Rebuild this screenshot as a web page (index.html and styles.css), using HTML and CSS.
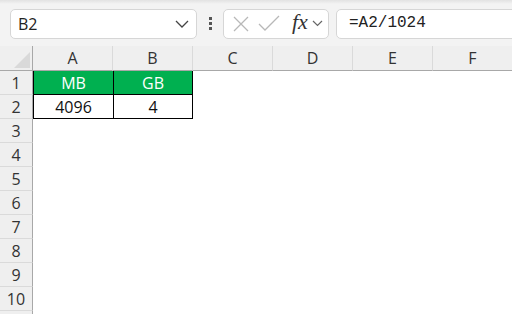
FILE: index.html
```html
<!DOCTYPE html>
<html lang="en">
<head>
    <meta charset="UTF-8">
    <title>Sheet</title>
    <link rel="stylesheet" href="styles.css">
</head>
<body>
    <div class="toolbar">
        <div class="name-box">
            <span class="name-text">B2</span>
            <svg class="chev" width="14" height="8" viewBox="0 0 14 8"><path d="M1 1 L7 7 L13 1" fill="none" stroke="#444" stroke-width="1.3"/></svg>
        </div>
        <div class="dots"><span></span><span></span><span></span></div>
        <div class="fx-box">
            <svg class="ico" width="18" height="18" viewBox="0 0 18 18"><path d="M2 2 L16 16 M16 2 L2 16" stroke="#b8b8b8" stroke-width="1.3"/></svg>
            <svg class="ico" width="22" height="18" viewBox="0 0 22 18"><path d="M1 9 L7 15 L21 1" fill="none" stroke="#b8b8b8" stroke-width="1.3"/></svg>
            <span class="fx">fx</span>
            <svg class="chev-sm" width="11" height="7" viewBox="0 0 11 7"><path d="M1 1 L5.5 5.5 L10 1" fill="none" stroke="#666" stroke-width="1.2"/></svg>
        </div>
        <div class="formula">=A2/1024</div>
    </div>
    <div class="sheet">
        <div class="corner"><div class="tri"></div></div>
        <div class="col-h">A</div>
        <div class="col-h">B</div>
        <div class="col-h">C</div>
        <div class="col-h">D</div>
        <div class="col-h">E</div>
        <div class="col-h">F</div>

        <div class="row-h">1</div>
        <div class="cell head bl">MB</div>
        <div class="cell head bl br">GB</div>
        <div class="cell"></div><div class="cell"></div><div class="cell"></div><div class="cell"></div>

        <div class="row-h">2</div>
        <div class="cell val bl bt bb">4096</div>
        <div class="cell val bl br bt bb">4</div>
        <div class="cell"></div><div class="cell"></div><div class="cell"></div><div class="cell"></div>

        <div class="row-h">3</div><div class="cell span"></div>
        <div class="row-h">4</div><div class="cell span"></div>
        <div class="row-h">5</div><div class="cell span"></div>
        <div class="row-h">6</div><div class="cell span"></div>
        <div class="row-h">7</div><div class="cell span"></div>
        <div class="row-h">8</div><div class="cell span"></div>
        <div class="row-h">9</div><div class="cell span"></div>
        <div class="row-h">10</div><div class="cell span"></div>
        <div class="row-h"></div><div class="cell span"></div>
    </div>
</body>
</html>
```

FILE: styles.css
```css
* {
    box-sizing: border-box;
}
body {
    margin: 0;
    width: 512px;
    height: 314px;
    overflow: hidden;
    background: #fff;
    font-family: 'Open Sans', 'Liberation Sans', Arial, sans-serif;
}
.toolbar {
    display: flex;
    align-items: center;
    height: 46px;
    padding: 1px 0 0 10px;
    background: linear-gradient(#e2e2e2, #f3f3f3 4px, #f3f3f3);
}
.name-box {
    display: flex;
    align-items: center;
    justify-content: space-between;
    width: 187px;
    height: 30px;
    padding: 0 7px 0 7px;
    background: #fff;
    border: 1px solid #d6d6d6;
    border-radius: 5px;
}
.name-text {
    font-size: 16px;
    color: #222;
}
.dots {
    display: flex;
    flex-direction: column;
    gap: 2px;
    margin: 0 11px 0 12px;
}
.dots span {
    width: 3px;
    height: 3px;
    background: #555;
}
.fx-box {
    display: flex;
    align-items: center;
    width: 106px;
    height: 30px;
    padding: 0 4px 0 8px;
    background: #fff;
    border: 1px solid #d6d6d6;
    border-radius: 5px;
}
.ico {
    margin-right: 8px;
}
.fx {
    font-family: 'Liberation Serif', 'DejaVu Serif', serif;
    font-style: italic;
    font-size: 22px;
    color: #333;
    margin: -3px 4px 0 4px;
}
.formula {
    flex: 1;
    height: 30px;
    margin-left: 7px;
    margin-right: -10px;
    padding: 4px 0 0 12px;
    background: #fff;
    border: 1px solid #d6d6d6;
    border-radius: 5px;
    font-family: 'Liberation Mono', 'DejaVu Sans Mono', monospace;
    font-size: 16px;
    color: #222;
}
.sheet {
    display: grid;
    grid-template-columns: 33px repeat(6, 80px);
    grid-template-rows: 25px repeat(11, 24px);
}
.corner {
    position: relative;
    background: #efefef;
    border-right: 1px solid #a8a8a8;
    border-bottom: 1px solid #a8a8a8;
}
.tri {
    position: absolute;
    right: 2px;
    bottom: 2px;
    width: 0;
    height: 0;
    border-left: 16px solid transparent;
    border-bottom: 16px solid #d9d9d9;
}
.col-h {
    display: flex;
    align-items: center;
    justify-content: center;
    background: #efefef;
    border-bottom: 1px solid #a8a8a8;
    border-right: 1px solid #dadada;
    font-size: 16px;
    color: #333;
}
.row-h {
    display: flex;
    align-items: center;
    justify-content: center;
    background: #efefef;
    border-right: 1px solid #a8a8a8;
    border-bottom: 1px solid #dadada;
    font-size: 16px;
    color: #333;
}
.cell {
    display: flex;
    align-items: center;
    justify-content: center;
    font-size: 16px;
    color: #111;
}
.span {
    grid-column: span 6;
}
.head {
    background: #00b050;
    color: #fff;
}
.bl {
    border-left: 1px solid #000;
}
.br {
    border-right: 1px solid #000;
}
.bt {
    border-top: 1px solid #000;
    margin-top: -1px;
}
.bb {
    border-bottom: 1px solid #000;
}
```
